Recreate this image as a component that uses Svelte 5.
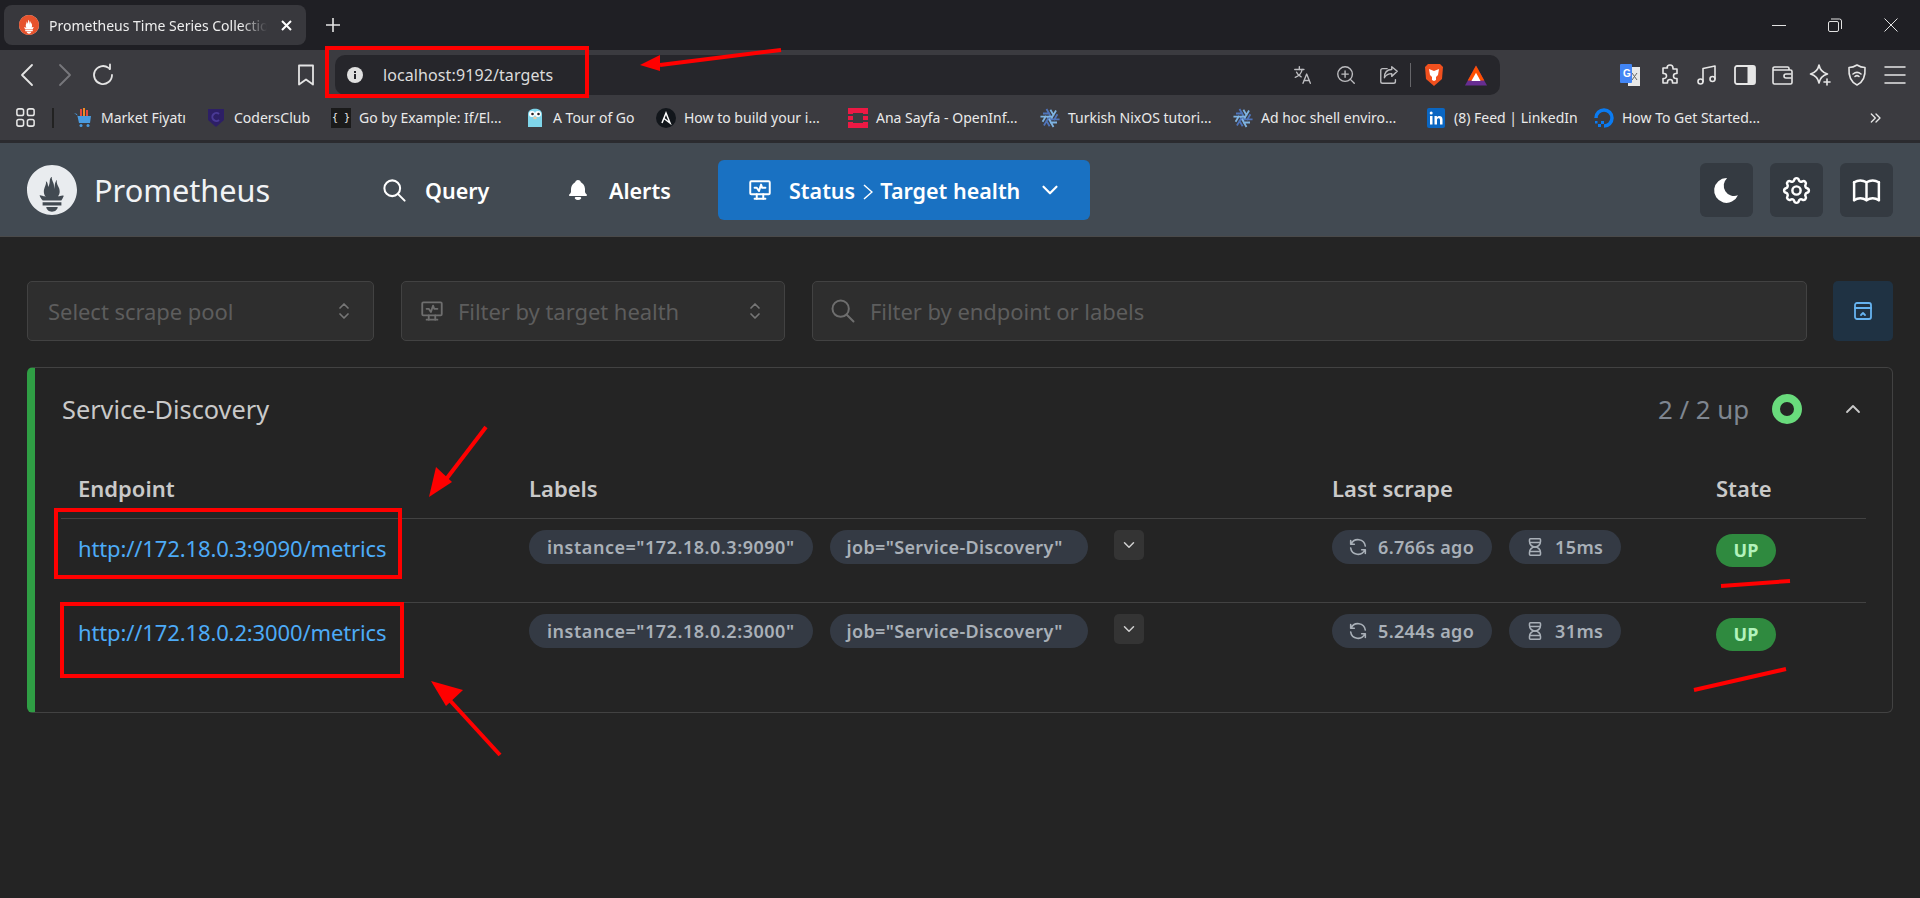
<script>
  const tabler = {
    search: ['M10 10m-7 0a7 7 0 1 0 14 0a7 7 0 1 0 -14 0', 'M21 21l-6 -6'],
    monitor: ['M3 5a1 1 0 0 1 1 -1h16a1 1 0 0 1 1 1v10a1 1 0 0 1 -1 1h-16a1 1 0 0 1 -1 -1z', 'M7 20h10', 'M9 16v4', 'M15 16v4', 'M7 10h2l2 3l2 -6l1 3h3'],
    selector: ['M8 9l4 -4l4 4', 'M16 15l-4 4l-4 -4'],
    down: ['M6 9l6 6l6 -6'],
    up: ['M6 15l6 -6l6 6'],
    settings: ['M10.325 4.317c.426 -1.756 2.924 -1.756 3.35 0a1.724 1.724 0 0 0 2.573 1.066c1.543 -.94 3.31 .826 2.37 2.37a1.724 1.724 0 0 0 1.065 2.572c1.756 .426 1.756 2.924 0 3.35a1.724 1.724 0 0 0 -1.066 2.573c.94 1.543 -.826 3.31 -2.37 2.37a1.724 1.724 0 0 0 -2.572 1.065c-.426 1.756 -2.924 1.756 -3.35 0a1.724 1.724 0 0 0 -2.573 -1.066c-1.543 .94 -3.31 -.826 -2.37 -2.37a1.724 1.724 0 0 0 -1.065 -2.572c-1.756 -.426 -1.756 -2.924 0 -3.35a1.724 1.724 0 0 0 1.066 -2.573c-.94 -1.543 .826 -3.31 2.37 -2.37c1 .608 2.296 .07 2.572 -1.065z', 'M9 12a3 3 0 1 0 6 0a3 3 0 0 0 -6 0'],
    book: ['M3 19a9 9 0 0 1 9 0a9 9 0 0 1 9 0', 'M3 6a9 9 0 0 1 9 0a9 9 0 0 1 9 0', 'M3 6l0 13', 'M12 6l0 13', 'M21 6l0 13'],
    refresh: ['M20 11a8.1 8.1 0 0 0 -15.5 -2m-.5 -4v4h4', 'M4 13a8.1 8.1 0 0 0 15.5 2m.5 4v-4h-4'],
    hourglass: ['M6.5 7h11', 'M6.5 17h11', 'M6 20v-2a6 6 0 1 1 12 0v2a1 1 0 0 1 -1 1h-10a1 1 0 0 1 -1 -1z', 'M6 4v2a6 6 0 1 0 12 0v-2a1 1 0 0 0 -1 -1h-10a1 1 0 0 0 -1 1z'],
    collapse: ['M4 6a2 2 0 0 1 2 -2h12a2 2 0 0 1 2 2v12a2 2 0 0 1 -2 2h-12a2 2 0 0 1 -2 -2z', 'M4 9h16', 'M10 16l2 -2l2 2'],
    back: ['M17 2l-10 10l10 10'],
    forward: ['M7 2l10 10l-10 10'],
    reload: ['M21 12a9 9 0 1 1 -3.500 -7.100', 'M19 1.500v4.500h-.5'],
    bookmark: ['M5 2.500h14v19l-7 -5l-7 5z'],
    translate: ['M3 6h10', 'M8 3v3', 'M11 6c-.6 4 -3.4 7 -7.5 8.5', 'M5 9c1 2.5 3 4 5 5', 'M12 21l4 -10l4 10', 'M13.5 18h5'],
    zoom: ['M11 11m-8 0a8 8 0 1 0 16 0a8 8 0 1 0 -16 0', 'M21 21l-4.5 -4.5', 'M11 7.5v7', 'M7.5 11h7'],
    share: ['M10 5h-5a2 2 0 0 0 -2 2v12a2 2 0 0 0 2 2h12a2 2 0 0 0 2 -2v-2', 'M21 8l-6 -5v3c-5 0 -8 3.500 -8 9c2 -3.500 4.500 -4.500 8 -4.500v3z'],
    puzzle: ['M9 5a3 3 0 0 1 6 0v1h4v4.500h-1a2.500 2.500 0 0 0 0 5h1v4.500h-4.500v-1a2.500 2.500 0 0 0 -5 0v1h-4.500v-4.500h1a2.500 2.500 0 0 0 0 -5h-1v-5.500h4.500z'],
    music: ['M8 18.500v-13l12 -2.500v13', 'M5.500 18.500m-2.500 0a2.500 2.500 0 1 0 5 0a2.500 2.500 0 1 0 -5 0', 'M17.500 16m-2.500 0a2.500 2.500 0 1 0 5 0a2.500 2.500 0 1 0 -5 0'],
    wallet: ['M19 7v-1.500a1.500 1.500 0 0 0 -1.500 -1.500h-13a1.500 1.500 0 0 0 -1.500 1.500v14a1.500 1.500 0 0 0 1.500 1.500h16a1.500 1.500 0 0 0 1.500 -1.500v-11a1.500 1.500 0 0 0 -1.500 -1.500h-17', 'M21 11h-5a2 2 0 0 0 0 4h5'],
    star: ['M11 2c1 5 3 7.500 8.500 9c-5.500 1.500 -7.500 4 -8.500 9c-1 -5 -3 -7.500 -8.500 -9c5.500 -1.500 7.500 -4 8.500 -9z', 'M19 16v6', 'M16 19h6'],
    shield: ['M12 2c3 2 5.500 2.500 8 2.500c.5 7 -.5 14 -8 17.500c-7.500 -3.500 -8.500 -10.500 -8 -17.500c2.500 0 5 -.5 8 -2.500z', 'M8 11c2.500 -2 5.500 -2 8 0', 'M10 13.500c1.200 -1 2.800 -1 4 0'],
    menu: ['M2 4h20', 'M2 12h20', 'M2 20h20'],
    apps: [
      'M5 3h3a2 2 0 0 1 2 2v3a2 2 0 0 1 -2 2h-3a2 2 0 0 1 -2 -2v-3a2 2 0 0 1 2 -2z',
      'M16 3h3a2 2 0 0 1 2 2v3a2 2 0 0 1 -2 2h-3a2 2 0 0 1 -2 -2v-3a2 2 0 0 1 2 -2z',
      'M5 14h3a2 2 0 0 1 2 2v3a2 2 0 0 1 -2 2h-3a2 2 0 0 1 -2 -2v-3a2 2 0 0 1 2 -2z',
      'M16 14h3a2 2 0 0 1 2 2v3a2 2 0 0 1 -2 2h-3a2 2 0 0 1 -2 -2v-3a2 2 0 0 1 2 -2z'
    ],
    chevrons: ['M5 6l6 6l-6 6', 'M12 6l6 6l-6 6']
  };

  const flame = 'M128.00106,0 C57.3172926,0 0,57.3066942 0,128.00106 C0,198.687887 57.3172926,255.998 128.00106,255.998 C198.684827,255.998 256,198.687887 256,128.00106 C256,57.3066942 198.682707,0 128.00106,0 L128.00106,0 Z M128.00106,239.562 C111.91616,239.562 98.876,228.816 98.876,215.566 L157.124,215.566 C157.124,228.816 144.086,239.562 128.00106,239.562 L128.00106,239.562 Z M176.101,207.622 L79.894,207.622 L79.894,190.176 L176.103,190.176 L176.103,207.622 L176.101,207.622 Z M175.756,181.196 L80.169,181.196 C79.851,180.83 79.525,180.468 79.219,180.096 C69.371,168.138 67.051,161.894 64.799,155.53 C64.761,155.32 76.74,157.978 85.235,159.89 C85.235,159.89 89.606,160.902 96.001,162.068 C89.861,154.872 86.214,145.724 86.214,136.374 C86.214,115.848 101.957,97.912 96.278,83.416 C101.806,83.866 107.719,95.084 108.118,112.624 C113.996,104.502 116.456,89.67 116.456,80.576 C116.456,71.16 122.66,60.222 128.866,59.848 C123.334,68.966 130.299,76.784 136.491,96.176 C138.813,103.46 138.517,115.718 140.311,123.48 C140.906,107.358 143.677,83.834 153.905,75.712 C149.393,85.94 154.573,99.738 158.116,105.82 C163.832,115.746 167.297,123.266 167.297,137.488 C167.297,146.024 164.114,154.08 158.729,160.378 C164.852,159.23 169.079,158.196 169.079,158.196 L188.965,154.316 C188.966,154.314 186.076,166.196 175.756,181.196 L175.756,181.196 Z';

  const bookmarks = [
    { kind: 'market', label: 'Market Fiyatı', w: 133 },
    { kind: 'coders', label: 'CodersClub', w: 125 },
    { kind: 'braces', label: 'Go by Example: If/El...', w: 194 },
    { kind: 'gopher', label: 'A Tour of Go', w: 131 },
    { kind: 'ansible', label: 'How to build your i...', w: 192 },
    { kind: 'openinfra', label: 'Ana Sayfa - OpenInf...', w: 192 },
    { kind: 'nix', label: 'Turkish NixOS tutori...', w: 193 },
    { kind: 'nix', label: 'Ad hoc shell enviro...', w: 193 },
    { kind: 'linkedin', label: '(8) Feed | LinkedIn', w: 168 },
    { kind: 'ocean', label: 'How To Get Started...', w: 200 }
  ];

  const targets = [
    { url: 'http://172.18.0.3:9090/metrics', instance: 'instance="172.18.0.3:9090"', ago: '6.766s ago', took: '15ms' },
    { url: 'http://172.18.0.2:3000/metrics', instance: 'instance="172.18.0.2:3000"', ago: '5.244s ago', took: '31ms' }
  ];
</script>

{#snippet icon(name, size = 24, stroke = 2)}
  <svg class="ic" width={size} height={size} viewBox="0 0 24 24" fill="none" stroke="currentColor" stroke-width={stroke} stroke-linecap="round" stroke-linejoin="round">
    {#each tabler[name] as d}<path {d} />{/each}
  </svg>
{/snippet}

{#snippet favicon(kind)}
  {#if kind === 'market'}
    <svg class="fav" viewBox="0 0 20 20"><rect x="7" y="1" width="2" height="7" fill="#e8483f"/><rect x="10" y="0" width="2" height="8" fill="#f08a24"/><rect x="13" y="2" width="2" height="6" fill="#e8483f"/><path d="M1 5l3 1 2 9h11l1-7H5" fill="#4a9be0"/><circle cx="8" cy="17.500" r="1.500" fill="#4a9be0"/><circle cx="15" cy="17.500" r="1.500" fill="#4a9be0"/></svg>
  {:else if kind === 'coders'}
    <svg class="fav" viewBox="0 0 20 20"><path d="M2 1h16v11l-8 7-8-7z" fill="#2d1f66"/><path d="M13 6a4 4 0 1 0 0 6" fill="none" stroke="#4a3a96" stroke-width="2"/></svg>
  {:else if kind === 'braces'}
    <span class="fav braces">{'{ }'}</span>
  {:else if kind === 'gopher'}
    <svg class="fav" viewBox="0 0 20 20"><path d="M3 19V6c0-7 14-7 14 0v13z" fill="#7fd5ea"/><circle cx="7" cy="6" r="3" fill="#fff"/><circle cx="13" cy="6" r="3" fill="#fff"/><circle cx="7.500" cy="6" r="1.300" fill="#222"/><circle cx="13.500" cy="6" r="1.300" fill="#222"/><ellipse cx="10" cy="10" rx="1.800" ry="1.200" fill="#e8c9a0"/></svg>
  {:else if kind === 'ansible'}
    <svg class="fav" viewBox="0 0 20 20"><circle cx="10" cy="10" r="10" fill="#12161b"/><path d="M6 15l4-10 4 10-6-4.500" fill="none" stroke="#fff" stroke-width="1.500"/></svg>
  {:else if kind === 'openinfra'}
    <svg class="fav" viewBox="0 0 20 20"><path d="M0 0h20v20H0z" fill="#ed1944"/><path d="M5 5h10v10H5z" fill="#3b3b40"/><path d="M0 6h5v2H0zM15 6h5v2h-5zM0 12h5v2H0zM15 12h5v2h-5z" fill="#3b3b40"/></svg>
  {:else if kind === 'nix'}
    <svg class="fav" viewBox="0 0 20 20" fill="none" stroke-width="1.800">
      {#each [0, 60, 120, 180, 240, 300] as a, i}
        <path d="M6.500 1l6 10.500M3 5.500h7" transform="rotate({a} 10 10)" stroke={i % 2 ? '#7eb3e2' : '#4f74ba'} />
      {/each}
    </svg>
  {:else if kind === 'linkedin'}
    <svg class="fav" viewBox="0 0 20 20"><rect x="1" width="18" height="20" rx="2" fill="#0a66c2"/><rect x="4" y="8" width="2.500" height="8.500" fill="#fff"/><circle cx="5.200" cy="5" r="1.500" fill="#fff"/><path d="M8.500 8h2.400v1.300c1.500-2.200 5.600-1.800 5.600 2v5.200H14v-4.500c0-2.400-3-2.200-3 0v4.500H8.500z" fill="#fff"/></svg>
  {:else}
    <svg class="fav" viewBox="0 0 20 20"><path d="M10 18a8 8 0 1 0-8-8" fill="none" stroke="#0a7bf2" stroke-width="3.500"/><path d="M7 13h3v3H7zM4 16h3v3H4zM1 13h2.500v2.500H1z" fill="#0a7bf2"/></svg>
  {/if}
{/snippet}

<div class="page">
  <div class="tabstrip">
    <div class="tab">
      <svg class="tabfav" viewBox="0 0 256 256"><circle cx="128" cy="128" r="128" fill="#fff"/><path d={flame} fill="#e6522c" fill-rule="evenodd"/></svg>
      <span class="tabtitle">Prometheus Time Series Collection</span>
      <svg class="closex" width="11" height="11" viewBox="0 0 11 11"><path d="M1 1l9 9M10 1l-9 9" stroke="#fff" stroke-width="2"/></svg>
    </div>
    <svg class="plus" width="14" height="14" viewBox="0 0 14 14"><path d="M7 0v14M0 7h14" stroke="#e4e4e4" stroke-width="1.600"/></svg>
    <div class="winctl">
      <svg width="14" height="14" viewBox="0 0 14 14"><path d="M0 7.500h14" stroke="#e2e2e2"/></svg>
      <svg width="14" height="14" viewBox="0 0 14 14" fill="none" stroke="#e2e2e2"><rect x=".5" y="3.500" width="10" height="10" rx="1.500"/><path d="M3 1h8.500a2 2 0 0 1 2 2v8"/></svg>
      <svg width="14" height="14" viewBox="0 0 14 14"><path d="M.5.500l13 13M13.500.500l-13 13" stroke="#e2e2e2"/></svg>
    </div>
  </div>

  <div class="toolbar">
    <div class="nav">
      <span class="light">{@render icon('back', 24, 1.800)}</span>
      <span class="dim">{@render icon('forward', 24, 1.800)}</span>
      <span class="light">{@render icon('reload', 24, 1.800)}</span>
      <span class="light push">{@render icon('bookmark', 24, 1.800)}</span>
    </div>
    <div class="omnibox">
      <svg class="info" width="16" height="16" viewBox="0 0 16 16"><circle cx="8" cy="8" r="8" fill="#e0e0e0"/><rect x="7" y="7" width="2" height="5" fill="#26262b"/><rect x="7" y="4" width="2" height="2" fill="#26262b"/></svg>
      <span class="url">localhost:9192/targets</span>
      <div class="omni-icons">
        {@render icon('translate', 22, 1.500)}
        {@render icon('zoom', 22, 1.500)}
        {@render icon('share', 22, 1.500)}
        <span class="vsep"></span>
        <svg width="20" height="24" viewBox="0 0 20 24"><path d="M4 1h12l3 3-1 12-8 7-8-7L1 4z" fill="#f1501e"/><path d="M5 6l5 2 5-2-1 6-2 2v3l-2 1-2-1v-3l-2-2z" fill="#fff"/></svg>
        <svg width="22" height="21" viewBox="0 0 24 22"><path d="M12 0l12 22H0z" fill="#662d91"/><path d="M12 0l9 16.500H3z" fill="#ff5000"/><path d="M12 8l5 9H7z" fill="#fff"/></svg>
      </div>
    </div>
    <div class="exts">
      <svg class="gt-ext" width="20" height="22" viewBox="0 0 20 22"><rect x="8" y="3" width="12" height="19" fill="#e8e8e8"/><path d="M12 9l5 7M17 9l-5 7" stroke="#666" stroke-width="1"/><rect y="0" width="12" height="19" rx="1" fill="#4285f4"/><text x="3" y="13" font-size="10" font-weight="700" fill="#fff" font-family="Liberation Sans">G</text></svg>
      {@render icon('puzzle', 24, 1.600)}
      {@render icon('music', 24, 1.600)}
      <svg width="24" height="24" viewBox="0 0 24 24"><rect x="2" y="3" width="20" height="18" rx="2" fill="none" stroke="currentColor" stroke-width="1.800"/><rect x="14.500" y="3" width="7.500" height="18" fill="currentColor"/></svg>
      {@render icon('wallet', 24, 1.600)}
      {@render icon('star', 24, 1.600)}
      {@render icon('shield', 24, 1.600)}
      {@render icon('menu', 24, 1.500)}
    </div>
  </div>

  <div class="bookmarks">
    <span class="apps">{@render icon('apps', 23, 1.600)}</span>
    <span class="bsep"></span>
    {#each bookmarks as b}
      <span class="bm" style="width: {b.w}px">
        {@render favicon(b.kind)}
        <span>{b.label}</span>
      </span>
    {/each}
    <span class="more">{@render icon('chevrons', 16, 2)}</span>
  </div>
  <div class="chrome-edge"></div>

  <header>
    <div class="brand">
      <svg width="50" height="50" viewBox="0 0 256 256"><path d={flame} fill="#e9ecef" fill-rule="evenodd"/></svg>
      <span>Prometheus</span>
    </div>
    <a class="link query">{@render icon('search', 27, 1.800)}<span>Query</span></a>
    <a class="link alerts">
      <svg class="ic" width="24" height="24" viewBox="0 0 24 24" fill="currentColor"><path d="M14.235 19c.865 0 1.322 1.024 .745 1.668a3.992 3.992 0 0 1 -2.98 1.332a3.992 3.992 0 0 1 -2.98 -1.332c-.552 -.616 -.158 -1.579 .634 -1.661l.11 -.006h4.471z"/><path d="M12 2c1.358 0 2.506 .903 2.875 2.141l.046 .171l.008 .043a8.013 8.013 0 0 1 4.024 6.069l.028 .287l.019 .289v2.931l.021 .136a3 3 0 0 0 1.143 1.847l.167 .117l.162 .099c.86 .487 .56 1.766 -.377 1.864l-.116 .006h-16c-1.028 0 -1.387 -1.364 -.493 -1.87a3 3 0 0 0 1.472 -2.063l.021 -.143l.001 -2.97a8 8 0 0 1 3.821 -6.454l.248 -.146l.01 -.043a3.003 3.003 0 0 1 2.562 -2.29l.182 -.017l.176 -.004z"/></svg>
      <span>Alerts</span>
    </a>
    <button class="status">
      {@render icon('monitor', 26, 1.800)}
      <span class="status-text">Status <svg class="gt" width="10" height="16" viewBox="0 0 10 16"><path d="M1 1l8 7-8 7" fill="none" stroke="#fff" stroke-width="1.500"/></svg> Target health</span>
      <span class="status-chev">{@render icon('down', 26, 2)}</span>
    </button>
    <div class="actions">
      <button class="square">
        <svg width="33" height="33" viewBox="0 0 24 24" fill="currentColor"><path d="M12 3c.132 0 .263 0 .393 0a7.5 7.5 0 0 0 7.92 12.446a9 9 0 1 1 -8.313 -12.454z"/></svg>
      </button>
      <button class="square">{@render icon('settings', 33, 1.800)}</button>
      <button class="square">{@render icon('book', 33, 1.800)}</button>
    </div>
  </header>

  <main>
    <div class="filters">
      <div class="field pool">
        <span class="ph">Select scrape pool</span>
        <span class="sel">{@render icon('selector', 24, 1.700)}</span>
      </div>
      <div class="field health">
        <span class="fi">{@render icon('monitor', 26, 1.700)}</span>
        <span class="ph">Filter by target health</span>
        <span class="sel">{@render icon('selector', 24, 1.700)}</span>
      </div>
      <div class="field search">
        <span class="fi">{@render icon('search', 28, 1.700)}</span>
        <span class="ph">Filter by endpoint or labels</span>
      </div>
      <button class="toggle">{@render icon('collapse', 24, 1.800)}</button>
    </div>

    <section class="card">
      <div class="card-head">
        <h2>Service-Discovery</h2>
        <span class="count">2 / 2 up</span>
        <span class="ring"></span>
        <span class="cchev">{@render icon('up', 24, 1.800)}</span>
      </div>
      <div class="table">
        <div class="row head">
          <span class="ep">Endpoint</span>
          <span>Labels</span>
          <span>Last scrape</span>
          <span>State</span>
        </div>
        {#each targets as t}
          <div class="row body">
            <a class="ep target">{t.url}</a>
            <div class="pills">
              <span class="pill inst">{t.instance}</span>
              <span class="pill job">job="Service-Discovery"</span>
              <button class="more-labels">{@render icon('down', 18, 2)}</button>
            </div>
            <div class="pills scrape">
              <span class="pill">{@render icon('refresh', 22, 1.700)}{t.ago}</span>
              <span class="pill">{@render icon('hourglass', 22, 1.700)}{t.took}</span>
            </div>
            <div class="state"><span class="up">UP</span></div>
          </div>
        {/each}
      </div>
    </section>
  </main>

  <svg class="marks" width="1920" height="898" viewBox="0 0 1920 898" fill="none">
    <rect x="327" y="48" width="260" height="48" stroke="#f00" stroke-width="4"/>
    <path d="M781 50L660 65" stroke="#f00" stroke-width="4"/>
    <path d="M640 65l20-10v16z" fill="#f00"/>
    <rect x="56" y="510" width="344" height="67" stroke="#f00" stroke-width="4"/>
    <rect x="62" y="604" width="340" height="72" stroke="#f00" stroke-width="4"/>
    <path d="M486 427L444 482" stroke="#f00" stroke-width="4"/>
    <path d="M429 497l7-30 16 15z" fill="#f00"/>
    <path d="M500 755L445 695" stroke="#f00" stroke-width="4"/>
    <path d="M431 681l32 9-17 16z" fill="#f00"/>
    <path d="M1721 586L1790 581" stroke="#f00" stroke-width="4"/>
    <path d="M1694 690L1786 669" stroke="#f00" stroke-width="4"/>
  </svg>
</div>

<style>
  :global(body) {
    margin: 0;
    background: #242424;
  }

  .page {
    position: relative;
    width: 1920px;
    height: 898px;
    overflow: hidden;
    background: #242424;
    font-family: "Noto Sans", "Open Sans", sans-serif;
    color: #c9c9c9;
  }

  .ic {
    display: block;
    flex: none;
  }

  /* browser chrome */
  .tabstrip {
    display: flex;
    height: 50px;
    background: #1f1f24;
    padding-left: 4px;
    box-sizing: border-box;
  }

  .tab {
    display: flex;
    align-items: center;
    width: 302px;
    height: 40px;
    margin-top: 5px;
    background: #38383d;
    border-radius: 8px;
    padding-left: 15px;
    box-sizing: border-box;
  }

  .tabfav {
    width: 20px;
    height: 20px;
    flex: none;
  }

  .tabtitle {
    width: 218px;
    margin-left: 10px;
    font-size: 14px;
    color: #eee;
    white-space: nowrap;
    overflow: hidden;
    -webkit-mask-image: linear-gradient(90deg, #000 88%, transparent);
    mask-image: linear-gradient(90deg, #000 88%, transparent);
  }

  .closex {
    margin-left: 14px;
  }

  .plus {
    margin: 18px 0 0 20px;
  }

  .winctl {
    display: flex;
    gap: 42px;
    margin-left: auto;
    padding: 18px 22px 0 0;
  }

  .winctl svg {
    display: block;
  }

  .toolbar {
    display: flex;
    height: 45px;
    background: #3b3b40;
  }

  .nav {
    display: flex;
    align-items: center;
    gap: 14px;
    width: 335px;
    box-sizing: border-box;
    padding: 0 17px 0 15px;
    margin-top: 5px;
  }

  .light {
    color: #e4e4e4;
  }

  .dim {
    color: #77777c;
  }

  .push {
    margin-left: auto;
  }

  .omnibox {
    display: flex;
    align-items: center;
    width: 1165px;
    height: 40px;
    margin-top: 5px;
    background: #26262b;
    border-radius: 10px;
    padding: 0 13px 0 12px;
    box-sizing: border-box;
  }

  .url {
    margin-left: 20px;
    font-size: 16px;
    letter-spacing: 0.1px;
    color: #dcdcdc;
  }

  .omni-icons {
    display: flex;
    align-items: center;
    gap: 21px;
    margin-left: auto;
    color: #bdbdc0;
  }

  .vsep {
    width: 1px;
    height: 24px;
    background: #66666a;
    margin: 0 -8px 0 -11px;
  }

  .exts {
    display: flex;
    align-items: center;
    gap: 13.500px;
    padding-left: 120px;
    margin-top: 5px;
    color: #e6e6e6;
  }

  .exts svg {
    display: block;
    flex: none;
  }

  .gt-ext {
    margin-right: 4px;
  }

  .bookmarks {
    display: flex;
    align-items: center;
    height: 45px;
    background: #3b3b40;
    padding-left: 14px;
    font-size: 14px;
    color: #eaeaea;
    box-sizing: border-box;
  }

  .apps {
    color: #e6e6e6;
  }

  .bsep {
    width: 2px;
    height: 20px;
    background: #222;
    margin: 0 19px 0 15px;
  }

  .bm {
    display: flex;
    align-items: center;
    gap: 8px;
    flex: none;
    white-space: nowrap;
  }

  .fav {
    display: block;
    width: 20px;
    height: 20px;
    flex: none;
  }

  .braces {
    background: #1a1a1a;
    color: #eee;
    font-size: 10px;
    line-height: 20px;
    text-align: center;
    font-family: "DejaVu Sans Mono", monospace;
  }

  .more {
    margin-left: 74px;
    color: #e6e6e6;
  }

  .chrome-edge {
    height: 3px;
    background: #2b2b2f;
  }

  /* app header */
  header {
    display: flex;
    align-items: center;
    height: 94px;
    padding: 1px 27px 0;
    background: #424a52;
    box-sizing: border-box;
    border-bottom: 1px solid #4a4a4a;
    color: #fff;
  }

  .brand {
    display: flex;
    align-items: center;
    gap: 17px;
    width: 356px;
    font-size: 30.700px;
    color: #f1f3f5;
    flex: none;
  }

  .brand svg {
    flex: none;
  }

  .link {
    display: flex;
    align-items: center;
    gap: 17px;
    font-size: 21.500px;
    font-weight: 600;
    flex: none;
    margin-left: -2px;
  }

  .query {
    width: 187px;
  }

  .alerts {
    width: 152px;
    gap: 19px;
  }

  .status {
    display: flex;
    align-items: center;
    width: 372px;
    height: 60px;
    padding: 0 0 0 29px;
    background: #1971c2;
    border: 0;
    border-radius: 6px;
    color: #fff;
    font: 600 21.500px "Noto Sans", sans-serif;
    flex: none;
  }

  .status-text {
    margin-left: 16px;
    white-space: nowrap;
  }

  .gt {
    margin: 0 2px;
    vertical-align: -1px;
  }

  .status-chev {
    margin-left: 17px;
  }

  .actions {
    display: flex;
    gap: 17px;
    margin-left: auto;
  }

  .square {
    display: flex;
    align-items: center;
    justify-content: center;
    width: 53px;
    height: 54px;
    padding: 0;
    border: 0;
    border-radius: 6px;
    background: #343a41;
    color: #fff;
  }

  /* filters */
  main {
    padding: 44px 27px 0;
  }

  .filters {
    display: flex;
    gap: 27px;
    height: 60px;
  }

  .field {
    display: flex;
    align-items: center;
    background: #2e2e2e;
    border: 1px solid #424242;
    border-radius: 5px;
    box-sizing: border-box;
    font-size: 22px;
    letter-spacing: -0.05px;
    color: #5d5d5d;
  }

  .pool {
    width: 347px;
    padding: 0 17px 0 20px;
  }

  .health {
    width: 384px;
    padding: 0 17px 0 17px;
  }

  .search {
    flex: 1;
    padding-left: 16px;
  }

  .fi {
    color: #6e6e6e;
    margin-right: 13px;
  }

  .sel {
    margin-left: auto;
    color: #767676;
  }

  .toggle {
    display: flex;
    align-items: center;
    justify-content: center;
    width: 60px;
    height: 60px;
    margin-left: -1px;
    padding: 0;
    border: 0;
    border-radius: 5px;
    background: #1f3243;
    color: #66b3f0;
  }

  /* target pool card */
  .card {
    height: 346px;
    margin-top: 26px;
    box-sizing: border-box;
    border: 1px solid #424242;
    border-left: 8px solid #2f9e44;
    border-radius: 6px;
  }

  .card-head {
    display: flex;
    align-items: center;
    height: 82px;
    padding-left: 27px;
  }

  h2 {
    margin: 0;
    font-size: 25.300px;
    font-weight: 400;
    color: #c9c9c9;
  }

  .count {
    margin-left: auto;
    font-size: 25.800px;
    color: #7f8690;
  }

  .ring {
    width: 30px;
    height: 30px;
    margin-left: 23px;
    border: 8.500px solid #69db7c;
    border-radius: 50%;
    box-sizing: border-box;
  }

  .cchev {
    margin: 0 27px 0 39px;
    color: #c9c9c9;
  }

  .table {
    margin: 0 26px;
  }

  .row {
    display: grid;
    grid-template-columns: 468px 803px 384px 1fr;
  }

  .head {
    height: 68px;
    align-items: center;
    padding-top: 7px;
    box-sizing: border-box;
    font-size: 22px;
    font-weight: 600;
    color: #c9c9c9;
  }

  .ep {
    padding-left: 17px;
  }

  .body {
    height: 84px;
    box-sizing: border-box;
    border-top: 1px solid #424242;
    padding-top: 11px;
  }

  .target {
    font-size: 22px;
    letter-spacing: -0.130px;
    line-height: 36px;
    color: #4dabf7;
    white-space: nowrap;
  }

  .pills {
    display: flex;
    align-items: flex-start;
    gap: 17px;
  }

  .pill {
    display: flex;
    align-items: center;
    gap: 9px;
    height: 34px;
    padding: 0 18px;
    border-radius: 17px;
    background: #343a44;
    color: #a9b0b8;
    font-size: 18px;
    font-weight: 600;
    letter-spacing: 0.350px;
    white-space: nowrap;
  }

  .inst {
    letter-spacing: 0.520px;
  }

  .job {
    padding: 0 18px 0 17px;
    width: 258px;
    box-sizing: border-box;
  }

  .scrape .pill {
    padding-left: 15px;
  }

  .more-labels {
    display: flex;
    align-items: center;
    justify-content: center;
    width: 30px;
    height: 30px;
    margin-left: 9px;
    padding: 0;
    border: 0;
    border-radius: 5px;
    background: #343434;
    color: #d0d0d0;
  }

  .state {
    padding-top: 4px;
  }

  .up {
    display: inline-block;
    width: 60px;
    height: 33px;
    line-height: 33px;
    border-radius: 17px;
    text-align: center;
    background: #2f8a3f;
    color: #b2f2bb;
    font-size: 18px;
    font-weight: 700;
  }

  .marks {
    position: absolute;
    top: 0;
    left: 0;
    pointer-events: none;
  }
</style>
